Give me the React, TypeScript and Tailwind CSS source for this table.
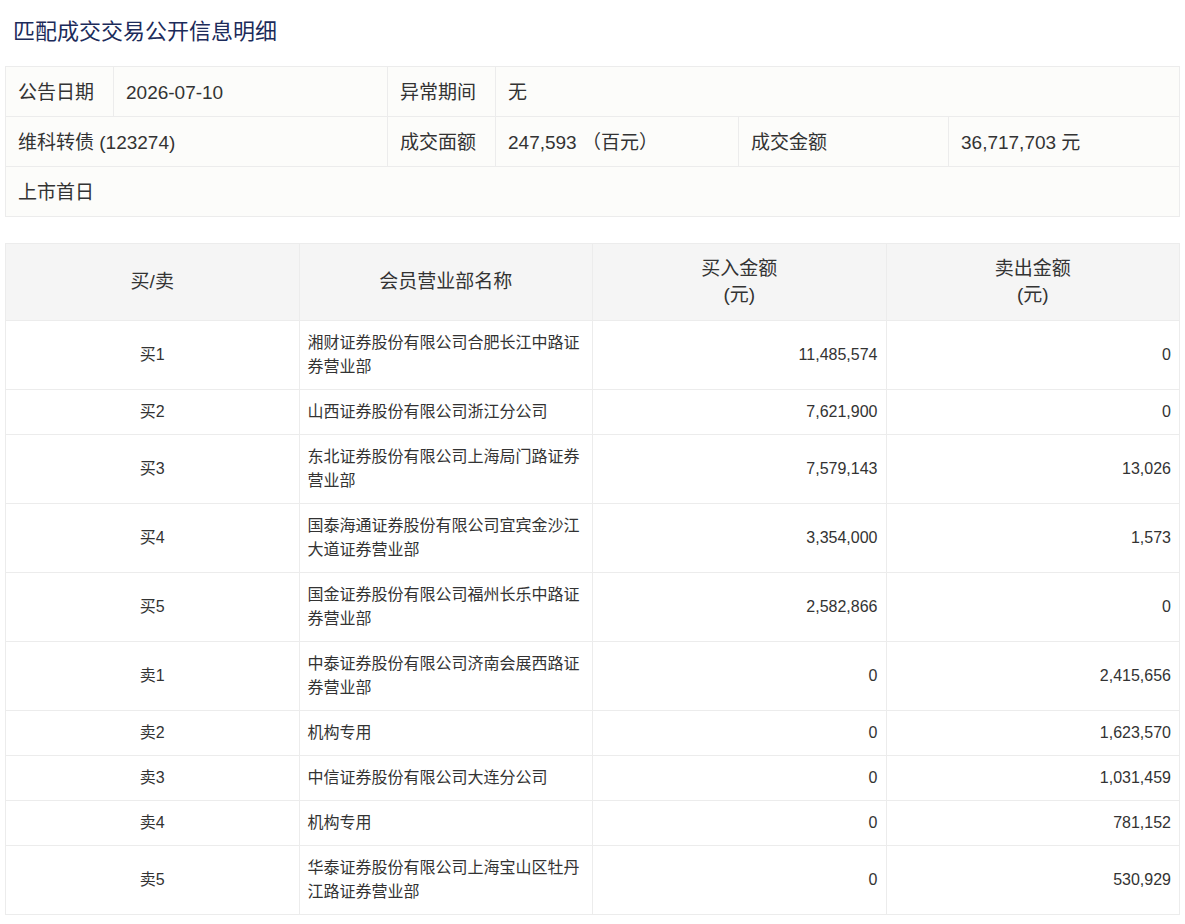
import { FC } from "react";

type Row = { side: string; name: string; buy: string; sell: string };

const rows: Row[] = [
  { side: "买1", name: "湘财证券股份有限公司合肥长江中路证券营业部", buy: "11,485,574", sell: "0" },
  { side: "买2", name: "山西证券股份有限公司浙江分公司", buy: "7,621,900", sell: "0" },
  { side: "买3", name: "东北证券股份有限公司上海局门路证券营业部", buy: "7,579,143", sell: "13,026" },
  { side: "买4", name: "国泰海通证券股份有限公司宜宾金沙江大道证券营业部", buy: "3,354,000", sell: "1,573" },
  { side: "买5", name: "国金证券股份有限公司福州长乐中路证券营业部", buy: "2,582,866", sell: "0" },
  { side: "卖1", name: "中泰证券股份有限公司济南会展西路证券营业部", buy: "0", sell: "2,415,656" },
  { side: "卖2", name: "机构专用", buy: "0", sell: "1,623,570" },
  { side: "卖3", name: "中信证券股份有限公司大连分公司", buy: "0", sell: "1,031,459" },
  { side: "卖4", name: "机构专用", buy: "0", sell: "781,152" },
  { side: "卖5", name: "华泰证券股份有限公司上海宝山区牡丹江路证券营业部", buy: "0", sell: "530,929" },
];

const font = { fontFamily: "'Liberation Sans', 'Noto Sans CJK SC', sans-serif" };

const InfoTable: FC = () => {
  const cell = "border border-[#ececec] px-3 pt-[3px] h-[50px] align-middle";
  return (
    <table className="w-full table-fixed border-collapse bg-[#fcfcfa] text-[19px] text-[#333]">
      <colgroup>
        <col className="w-[108px]" />
        <col className="w-[274px]" />
        <col className="w-[108px]" />
        <col className="w-[243px]" />
        <col className="w-[210px]" />
        <col />
      </colgroup>
      <tbody>
        <tr>
          <td className={cell}>公告日期</td>
          <td className={cell}>2026-07-10</td>
          <td className={cell}>异常期间</td>
          <td className={cell} colSpan={3}>无</td>
        </tr>
        <tr>
          <td className={cell} colSpan={2}>维科转债 (123274)</td>
          <td className={cell}>成交面额</td>
          <td className={cell}>247,593 （百元）</td>
          <td className={cell}>成交金额</td>
          <td className={cell}>36,717,703 元</td>
        </tr>
        <tr>
          <td className={cell} colSpan={6}>上市首日</td>
        </tr>
      </tbody>
    </table>
  );
};

const DealTable: FC = () => {
  const th = "border border-[#ececec] bg-[#f5f5f5] font-normal text-[19px] leading-[26px] py-[12px] text-center align-middle";
  const td = "border border-[#ececec] px-2 py-[10px] text-[16px] leading-6 align-middle";
  return (
    <table className="w-full table-fixed border-collapse text-[#333]">
      <thead>
        <tr>
          <th className={th}>买/卖</th>
          <th className={th}>会员营业部名称</th>
          <th className={th}>
            买入金额
            <br />
            (元)
          </th>
          <th className={th}>
            卖出金额
            <br />
            (元)
          </th>
        </tr>
      </thead>
      <tbody>
        {rows.map((r) => (
          <tr key={r.side}>
            <td className={`${td} text-center`}>{r.side}</td>
            <td className={td}>{r.name}</td>
            <td className={`${td} text-right`}>{r.buy}</td>
            <td className={`${td} text-right`}>{r.sell}</td>
          </tr>
        ))}
      </tbody>
    </table>
  );
};

export default function App() {
  return (
    <div className="min-h-screen bg-white px-[5px] pb-2" style={font}>
      <h1 className="pl-2 pt-[16px] pb-[18px] text-[22px] leading-[32px] font-normal text-[#1c2b5a]">
        匹配成交交易公开信息明细
      </h1>
      <InfoTable />
      <div className="h-[26px]" />
      <DealTable />
    </div>
  );
}
